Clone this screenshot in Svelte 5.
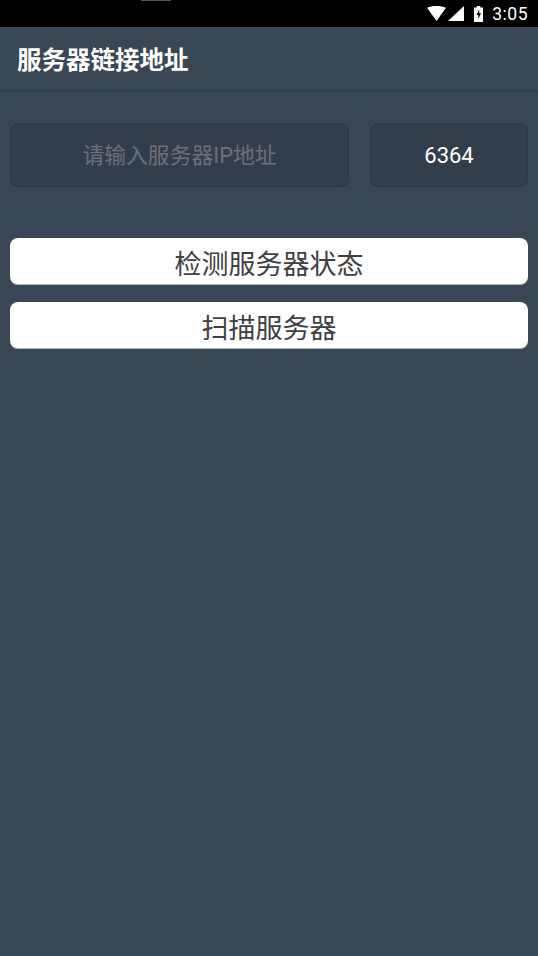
<script>
	let ip = '';
	let port = '6364';
</script>

<div class="page">
	<div class="statusbar">
		<span class="notch"></span>
		<svg class="wifi" width="19" height="15" viewBox="0 0 20 14" preserveAspectRatio="none"><path d="M0 1.600C2.800 .6 6.200 0 10 0s7.200 .6 10 1.600L10 14z" fill="#fff"/></svg>
		<svg class="signal" width="16" height="15" viewBox="0 0 16 15"><path d="M16 0v15H0z" fill="#fff"/></svg>
		<svg class="battery" width="9" height="16" viewBox="0 0 10 16" preserveAspectRatio="none"><path fill-rule="evenodd" d="M3 0h4v1.500h3V16H0V1.500h3zM5.800 3.500 2.800 9h2v4l3-5.800h-2z" fill="#fff"/></svg>
		<span class="time">3:05</span>
	</div>

	<header class="titlebar">服务器链接地址</header>

	<div class="inputs">
		<input class="field ip" placeholder="请输入服务器IP地址" bind:value={ip} />
		<input class="field port" bind:value={port} />
	</div>

	<div class="actions">
		<button>检测服务器状态</button>
		<button>扫描服务器</button>
	</div>
</div>

<style>
	:global(body) {
		margin: 0;
		background: #394656;
	}

	.page {
		height: 956px;
		overflow: hidden;
		background: #394656;
		font-family: Roboto, "Noto Sans CJK SC", sans-serif;
	}

	.statusbar {
		position: relative;
		height: 27px;
		background: #000;
		display: flex;
		align-items: center;
		justify-content: flex-end;
		padding-right: 10px;
		color: #fff;
	}

	.notch {
		position: absolute;
		left: 141px;
		top: 0;
		width: 30px;
		height: 1px;
		background: #555;
	}

	.wifi {
		margin-right: 2px;
	}

	.signal {
		margin-right: 10px;
	}

	.battery {
		margin-right: 9px;
	}

	.time {
		font-size: 17.500px;
		letter-spacing: 0.5px;
	}

	.titlebar {
		height: 63px;
		box-sizing: border-box;
		padding: 18px 0 0 17px;
		font-size: 24.500px;
		line-height: 32px;
		font-weight: 700;
		color: #fff;
		background: #394656;
		box-shadow: 0 1px 3px rgba(0, 0, 0, 0.22);
	}

	.inputs {
		display: flex;
		gap: 21px;
		padding: 33px 10px 0;
	}

	.field {
		height: 64px;
		box-sizing: border-box;
		border: 1px solid #2c3644;
		border-radius: 8px;
		background: #333e4d;
		text-align: center;
		font-family: inherit;
		font-size: 22px;
		color: #fff;
		outline: none;
		padding: 0;
	}

	.field::placeholder {
		color: #6d7075;
		opacity: 1;
	}

	.ip {
		width: 339px;
		font-size: 21.800px;
	}

	.port {
		width: 158px;
	}

	.actions {
		display: flex;
		flex-direction: column;
		gap: 17px;
		padding: 50.500px 10px 0;
	}

	button {
		height: 47px;
		border: none;
		border-bottom: 1px solid #b5bac0;
		border-radius: 8px;
		background: #fff;
		color: #404040;
		font-family: inherit;
		font-size: 27px;
		padding: 3px 0 0;
	}
</style>
